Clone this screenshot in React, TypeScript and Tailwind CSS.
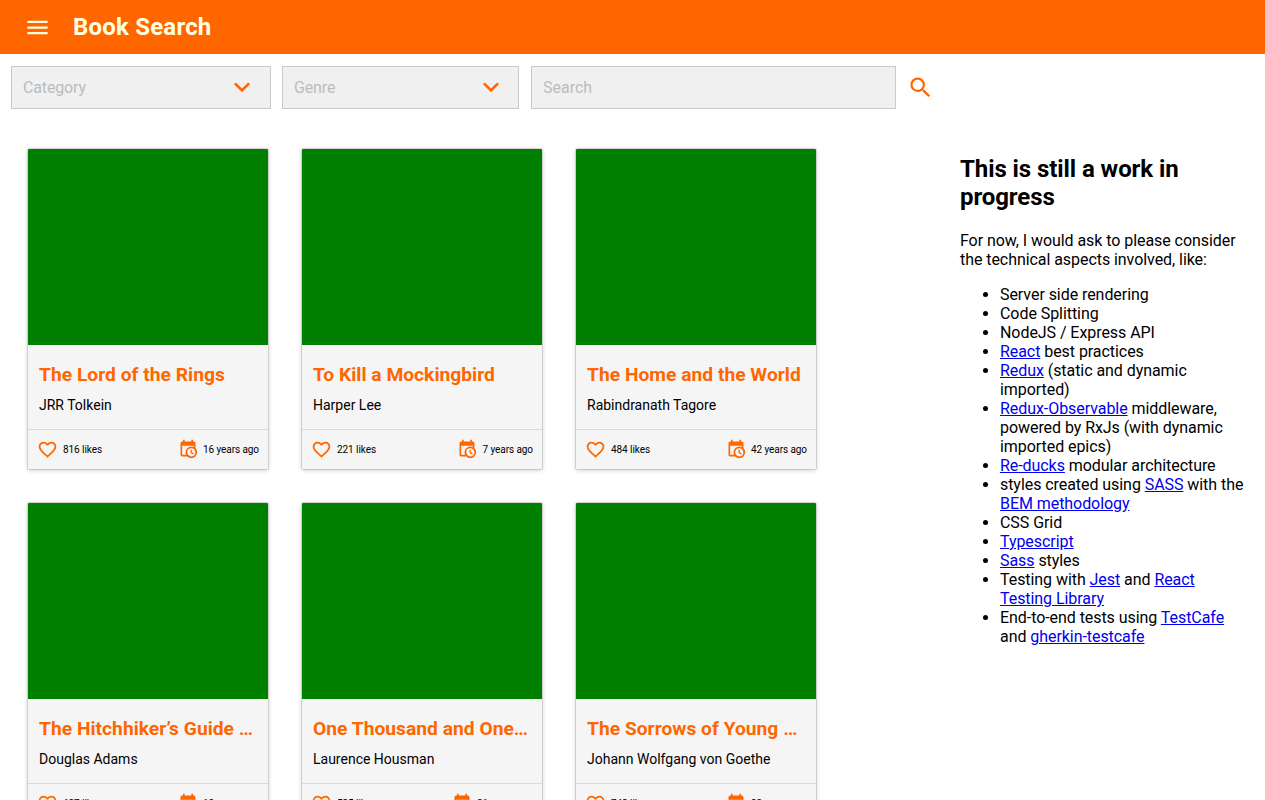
import type { ReactNode } from "react";
import { MdExpandMore, MdFavoriteBorder, MdMenu, MdSearch } from "react-icons/md";

interface Book {
  title: string;
  author: string;
  likes: number;
  years: number;
}

const books: Book[] = [
  { title: "The Lord of the Rings", author: "JRR Tolkein", likes: 816, years: 16 },
  { title: "To Kill a Mockingbird", author: "Harper Lee", likes: 221, years: 7 },
  { title: "The Home and the World", author: "Rabindranath Tagore", likes: 484, years: 42 },
  { title: "The Hitchhiker’s Guide …", author: "Douglas Adams", likes: 627, years: 18 },
  { title: "One Thousand and One…", author: "Laurence Housman", likes: 535, years: 21 },
  { title: "The Sorrows of Young …", author: "Johann Wolfgang von Goethe", likes: 742, years: 33 },
];

function CalendarClock() {
  return (
    <svg viewBox="0 0 24 24" fill="currentColor" className="mb-px size-5 shrink-0 text-[#ff6600]">
      <path d="M15,13H16.5V15.82L18.94,17.23L18.19,18.53L15,16.69V13M19,8H5V19H9.67C9.24,18.09 9,17.07 9,16A7,7 0 0,1 16,9C17.07,9 18.09,9.24 19,9.67V8M5,21C3.89,21 3,20.1 3,19V5C3,3.89 3.89,3 5,3H6V1H8V3H16V1H18V3H19A2,2 0 0,1 21,5V11.1C22.24,12.36 23,14.09 23,16A7,7 0 0,1 16,23C14.09,23 12.36,22.24 11.1,21H5M16,11.15A4.85,4.85 0 0,0 11.15,16C11.15,18.68 13.32,20.85 16,20.85A4.85,4.85 0 0,0 20.85,16C20.85,13.32 18.68,11.15 16,11.15Z" />
    </svg>
  );
}

function BookCard({ book }: { book: Book }) {
  return (
    <article className="flex h-80 w-60 flex-col overflow-hidden rounded-[1px] bg-[#f5f5f5] shadow-[0_0_0_1px_rgba(0,0,0,0.11),0_1px_5px_rgba(0,0,0,0.22)]">
      <div className="h-[196px] shrink-0 bg-[#008000]" />
      <div className="h-[84px] shrink-0 px-[11px] pt-[18px]">
        <h3 className="text-[19.2px] leading-[23px] font-bold tracking-[0.03px] whitespace-nowrap text-[#ff6600]">{book.title}</h3>
        <p className="mt-[11px] text-sm leading-4">{book.author}</p>
      </div>
      <div className="flex h-10 items-center justify-between border-t border-[#dadada] px-[9px] text-[10px] leading-3 tracking-[-0.07px]">
        <span className="flex items-center gap-[5px]">
          <MdFavoriteBorder className="size-[21px] text-[#ff6600]" />
          <span className="pt-px">{book.likes} likes</span>
        </span>
        <span className="flex items-center gap-[5px]">
          <CalendarClock />
          <span className="pt-px">{book.years} years ago</span>
        </span>
      </div>
    </article>
  );
}

function Dropdown({ label, className }: { label: string; className: string }) {
  return (
    <button
      className={`flex h-[43px] items-center justify-between border border-[#cacaca] bg-[#f0f0f0] pl-[11px] tracking-[-0.14px] text-[#bcbcbc] ${className}`}
    >
      {label}
      <MdExpandMore className="mb-px size-8 text-[#ff6600]" />
    </button>
  );
}

function Link({ children }: { children: ReactNode }) {
  return (
    <a href="#" className="text-[#0000ee] underline">
      {children}
    </a>
  );
}

function Sidebar() {
  return (
    <aside className="w-[289px] pt-[6px] leading-[19px] tracking-[-0.06px]">
      <h2 className="text-2xl leading-7 font-bold tracking-[-0.08px]">This is still a work in progress</h2>
      <p className="mt-5">For now, I would ask to please consider the technical aspects involved, like:</p>
      <ul className="mt-4 list-disc pl-10">
        <li>Server side rendering</li>
        <li>Code Splitting</li>
        <li>NodeJS / Express API</li>
        <li><Link>React</Link> best practices</li>
        <li><Link>Redux</Link> (static and dynamic imported)</li>
        <li><Link>Redux-Observable</Link> middleware, powered by RxJs (with dynamic imported epics)</li>
        <li><Link>Re-ducks</Link> modular architecture</li>
        <li>styles created using <Link>SASS</Link> with the <Link>BEM methodology</Link></li>
        <li>CSS Grid</li>
        <li><Link>Typescript</Link></li>
        <li><Link>Sass</Link> styles</li>
        <li>Testing with <Link>Jest</Link> and <Link>React Testing Library</Link></li>
        <li>End-to-end tests using <Link>TestCafe</Link> and <Link>gherkin-testcafe</Link></li>
      </ul>
    </aside>
  );
}

export default function App() {
  return (
    <div className="h-screen overflow-hidden bg-white font-[Roboto,sans-serif] text-base text-black">
      <header className="flex h-[54px] items-center bg-[#ff6600] pl-6 text-[#ffffe0]">
        <MdMenu className="mt-px size-[27px]" />
        <h1 className="ml-[22px] text-2xl leading-7 font-bold tracking-[0.2px]">Book Search</h1>
      </header>
      <div className="flex items-center pt-3 pl-[11px]">
        <Dropdown label="Category" className="w-[260px] pr-3" />
        <Dropdown label="Genre" className="ml-[11px] w-[237px] pr-[11px]" />
        <input
          placeholder="Search"
          className="ml-3 h-[43px] w-[365px] border border-[#cacaca] bg-[#f0f0f0] px-[11px] placeholder:text-[#bcbcbc]"
        />
        <MdSearch className="ml-[11px] size-[27px] text-[#ff6600]" />
      </div>
      <div className="flex pt-10 pl-7">
        <main className="grid w-[932px] shrink-0 grid-cols-[repeat(3,240px)] content-start gap-[34px]">
          {books.map((book) => (
            <BookCard key={book.title} book={book} />
          ))}
        </main>
        <Sidebar />
      </div>
    </div>
  );
}
